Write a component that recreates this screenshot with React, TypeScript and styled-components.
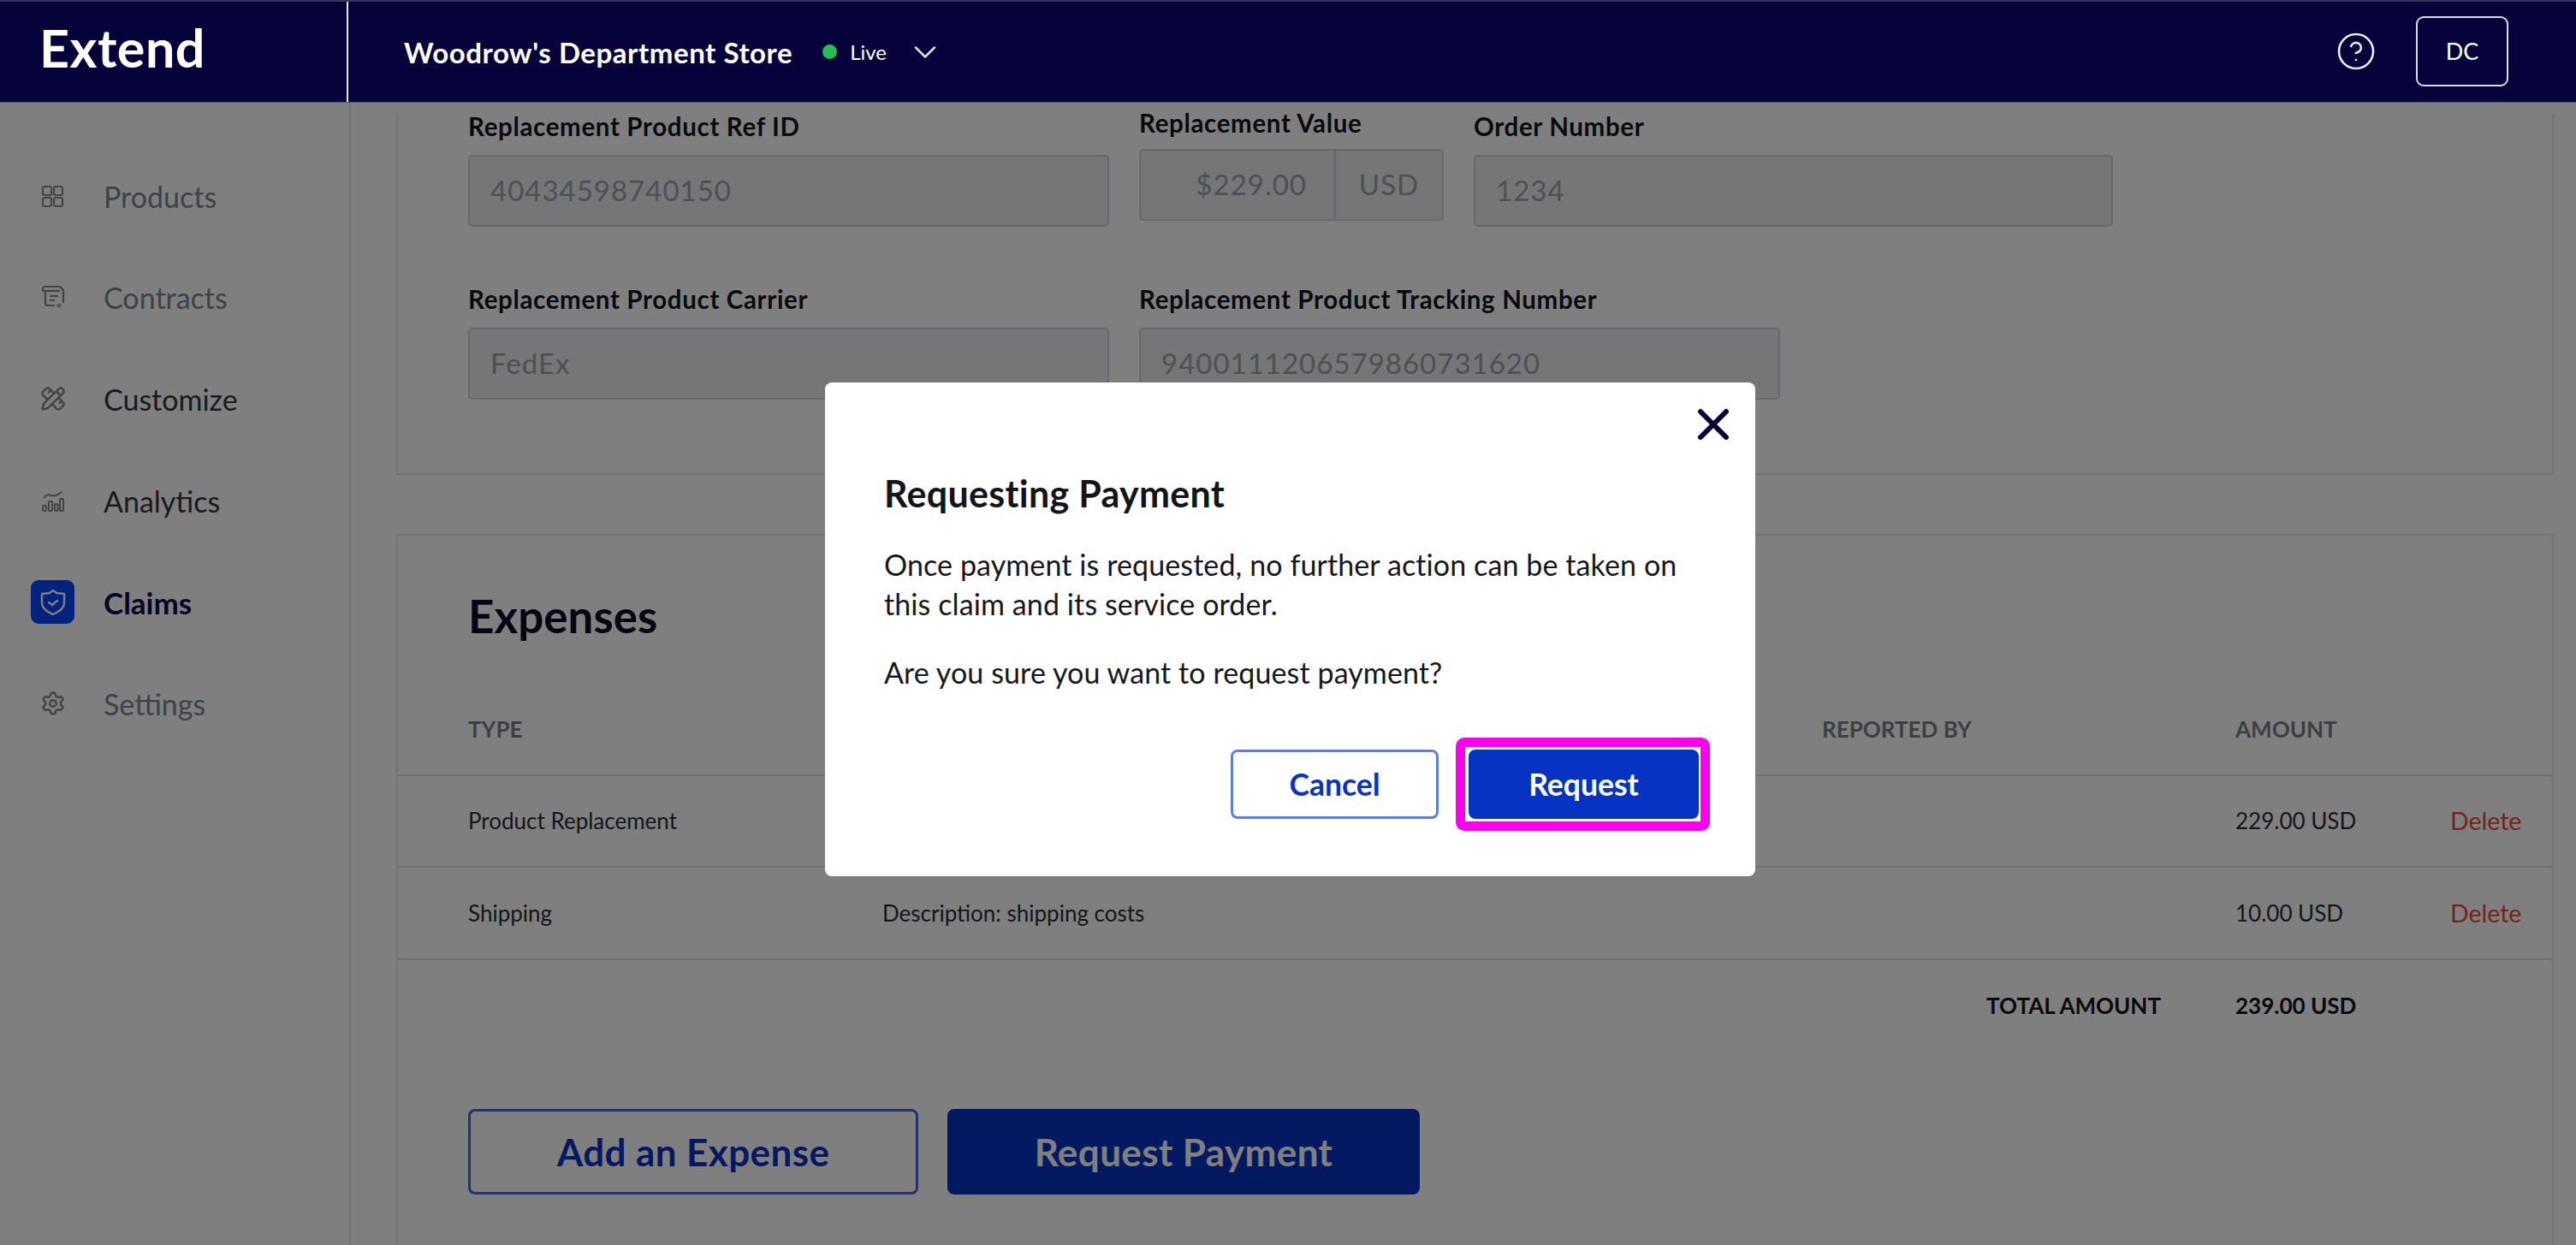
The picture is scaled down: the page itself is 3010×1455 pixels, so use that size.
import styled, { createGlobalStyle } from "styled-components";
import { ChevronDown, CircleHelp, PencilRuler, Settings, X } from "lucide-react";

const font = `"Lato", "Open Sans", sans-serif`;

const GlobalStyle = createGlobalStyle`
  html, body { margin: 0; padding: 0; background: #fff; }
  * { box-sizing: border-box; }
`;

const Page = styled.div`
  position: relative;
  width: 3010px;
  height: 1455px;
  overflow: hidden;
  background: #fff;
  font-family: ${font};
  color: #2b2e34;
`;

const TopBar = styled.header`
  position: relative;
  z-index: 3;
  display: flex;
  align-items: stretch;
  height: 120px;
  background: #06033a;
  border-top: 2px solid #35335f;
  border-bottom: 1px solid #55557a;
  color: #fff;
`;

const Brand = styled.div`
  display: flex;
  align-items: center;
  width: 407px;
  padding: 0 0 10px 46px;
  border-right: 2px solid #e6e6ee;
  font-size: 61px;
  font-weight: 700;
  letter-spacing: 0.5px;
`;

const Store = styled.div`
  display: flex;
  align-items: center;
  flex: 1;
  padding-left: 65px;
`;

const StoreName = styled.span`
  font-size: 33px;
  font-weight: 700;
  letter-spacing: 0.55px;
`;

const LiveDot = styled.span`
  width: 17px;
  height: 17px;
  margin-left: 35px;
  border-radius: 50%;
  background: #22c04f;
`;

const LiveText = styled.span`
  margin-left: 15px;
  font-size: 24px;
`;

const Chevron = styled(ChevronDown)`
  margin-left: 23px;
  color: #d8d8e2;
`;

const HelpIcon = styled(CircleHelp)`
  margin-right: 46px;
  color: #ecedf3;
`;

const Actions = styled.div`
  display: flex;
  align-items: center;
  padding: 0 79px 2px 0;
`;

const UserButton = styled.div`
  display: flex;
  align-items: center;
  justify-content: center;
  width: 108px;
  height: 82px;
  border: 2px solid #dcdce6;
  border-radius: 9px;
  font-size: 27px;
`;

const Body = styled.div`
  display: flex;
  height: 1335px;
`;

const Sidebar = styled.nav`
  display: flex;
  flex-direction: column;
  flex: 0 0 410px;
  padding-top: 50px;
  border-right: 2px solid #e4e6ea;
`;

const NavItem = styled.div<{ $tone: string; $bold?: boolean }>`
  display: flex;
  align-items: center;
  height: 118.6px;
  color: ${(p) => p.$tone};
  font-size: ${(p) => (p.$bold ? 35 : 34)}px;
  font-weight: ${(p) => (p.$bold ? 700 : 400)};
`;

const NavIconBox = styled.span<{ $active?: boolean }>`
  display: flex;
  align-items: center;
  justify-content: center;
  width: 51px;
  height: 51px;
  margin: 0 34px 0 36px;
  border-radius: 9px;
  background: ${(p) => (p.$active ? "#0646fe" : "transparent")};
  color: ${(p) => (p.$active ? "#fff" : "#848990")};
`;

const Main = styled.main`
  flex: 1;
  padding: 13px 26px 0 53px;
  overflow: hidden;
`;

const Card = styled.section<{ $top?: boolean }>`
  border: 2px solid #e6e8eb;
  border-top-width: ${(p) => (p.$top ? 0 : 2)}px;
  margin-bottom: 69px;
  padding-bottom: ${(p) => (p.$top ? 86 : 120)}px;
`;

const FieldRow = styled.div<{ $gap?: number }>`
  display: flex;
  gap: 35px;
  padding-left: 82px;
  margin-top: ${(p) => p.$gap ?? 0}px;
`;

const Field = styled.div<{ $width: number; $raised?: boolean }>`
  width: ${(p) => p.$width}px;
  margin-top: ${(p) => (p.$raised ? -4 : 0)}px;
`;

const Label = styled.div<{ $raised?: boolean }>`
  height: 30px;
  margin-bottom: ${(p) => (p.$raised ? 15 : 18)}px;
  color: #14151b;
  font-size: 29.5px;
  font-weight: 700;
  letter-spacing: 0.65px;
  line-height: 30px;
  white-space: nowrap;
`;

const InputBox = styled.div`
  display: flex;
  align-items: center;
  height: 84px;
  padding: 0 0 3px 24px;
  background: #e8ecf0;
  border: 2px solid #ced3da;
  border-radius: 5px;
  color: #9aa1ab;
  font-size: 33px;
  letter-spacing: 1px;
`;

const MoneyBox = styled(InputBox)`
  padding: 0;
`;

const MoneyValue = styled.div`
  flex: 1;
  padding: 0 32px 3px 0;
  text-align: right;
`;

const MoneyUnit = styled.div`
  display: flex;
  align-items: center;
  justify-content: center;
  width: 126px;
  height: 100%;
  padding-bottom: 3px;
  border-left: 2px solid #ced3da;
`;

const SectionTitle = styled.h2`
  height: 60px;
  margin: 64px 0 49px 82px;
  color: #0c0c24;
  font-size: 53px;
  font-weight: 700;
  line-height: 60px;
`;

const TableRow = styled.div<{ $noLine?: boolean }>`
  display: grid;
  grid-template-columns: 484px 1098px 483px 251px 1fr;
  align-items: center;
  height: 107.5px;
  padding-left: 82px;
  border-bottom: ${(p) => (p.$noLine ? "none" : "2px solid #dfe2e6")};
  font-size: 26px;
`;

const HeadCell = styled.div`
  color: #7a7e86;
  font-size: 26px;
  font-weight: 700;
`;

const Cell = styled.div<{ $bold?: boolean }>`
  color: ${(p) => (p.$bold ? "#14151b" : "#2b2e34")};
  font-weight: ${(p) => (p.$bold ? 700 : 400)};
`;

const TotalCell = styled(Cell)`
  grid-column: 3;
  padding-right: 87px;
  text-align: right;
`;

const DeleteLink = styled.div`
  color: #e64a32;
  font-size: 28.5px;
`;

const ButtonRow = styled.div`
  display: flex;
  gap: 34px;
  padding: 67px 0 0 82px;
`;

const PageButton = styled.div<{ $filled?: boolean; $width: number }>`
  display: flex;
  align-items: center;
  justify-content: center;
  width: ${(p) => p.$width}px;
  height: 100px;
  border: 3px solid ${(p) => (p.$filled ? "#0733c2" : "#4a66d8")};
  border-radius: 8px;
  background: ${(p) => (p.$filled ? "#0733c2" : "transparent")};
  color: ${(p) => (p.$filled ? "#fff" : "#0a33c4")};
  font-size: 44px;
  font-weight: 700;
  letter-spacing: 0.4px;
`;

const Overlay = styled.div`
  position: absolute;
  inset: 120px 0 0 0;
  z-index: 2;
  background: rgba(0, 0, 0, 0.5);
`;

const Modal = styled.div`
  position: absolute;
  top: 447px;
  left: 964px;
  z-index: 4;
  width: 1087px;
  height: 577px;
  padding: 106px 69px 0;
  border-radius: 8px;
  background: #fff;
  color: #17181e;
`;

const CloseIcon = styled(X)`
  position: absolute;
  top: 19px;
  right: 19px;
  color: #06033a;
`;

const ModalTitle = styled.h3`
  margin: 0 0 36px;
  color: #14151b;
  font-size: 43px;
  font-weight: 700;
  letter-spacing: 0.3px;
  line-height: 48px;
`;

const ModalText = styled.p`
  margin: 0 0 34px;
  font-size: 34px;
  letter-spacing: 0.1px;
  line-height: 46px;
`;

const ModalActions = styled.div`
  position: absolute;
  top: 429px;
  right: 66px;
  display: flex;
  gap: 35px;
`;

const ModalButton = styled.div<{ $filled?: boolean }>`
  display: flex;
  align-items: center;
  justify-content: center;
  width: ${(p) => (p.$filled ? 269 : 243)}px;
  height: 81px;
  border: 3px solid ${(p) => (p.$filled ? "#0733c2" : "#5f7fe0")};
  border-radius: 8px;
  background: ${(p) => (p.$filled ? "#0733c2" : "#fff")};
  color: ${(p) => (p.$filled ? "#fff" : "#0a33c4")};
  font-size: 35.5px;
  font-weight: 700;
`;

const Highlight = styled.div`
  position: absolute;
  inset: -14px -13px -14px -15px;
  border: 11px solid #ff00ee;
  border-radius: 10px;
  pointer-events: none;
`;

const HighlightWrap = styled.div`
  position: relative;
`;

const ProductsIcon = () => (
  <svg width="27" height="27" viewBox="0 0 27 27" fill="none" stroke="currentColor" strokeWidth="2.2">
    <rect x="2" y="2" width="10" height="10" rx="2" />
    <rect x="15" y="2" width="10" height="10" rx="2" />
    <rect x="2" y="15" width="10" height="10" rx="2" />
    <rect x="15" y="15" width="10" height="10" rx="2" />
  </svg>
);

const ContractsIcon = () => (
  <svg width="28" height="30" viewBox="0 0 28 30" fill="none" stroke="currentColor" strokeWidth="2.2">
    <path d="M2 7V4.5A2.5 2.5 0 0 1 4.5 2H22l4 4v15" />
    <path d="M2 7h20" />
    <path d="M5 7v14a3 3 0 0 0 3 3h8" />
    <path d="M10 13h10M10 18h6" />
    <circle cx="21" cy="24" r="2.5" fill="#c79aa0" stroke="none" />
  </svg>
);

const AnalyticsIcon = () => (
  <svg width="28" height="28" viewBox="0 0 28 28" fill="none" stroke="currentColor" strokeWidth="2">
    <path d="M3 11c4-5 6-4 9-3s7 0 12-4" />
    <rect x="2" y="20" width="4" height="6" rx="1" />
    <rect x="9" y="15" width="4" height="11" rx="1" />
    <rect x="16" y="18" width="3.6" height="8" rx="1" />
    <rect x="22" y="12" width="4" height="14" rx="1" />
  </svg>
);

const ClaimsIcon = () => (
  <svg width="30" height="32" viewBox="0 0 30 32" fill="none" stroke="currentColor" strokeWidth="2.4" strokeLinecap="round" strokeLinejoin="round">
    <path d="M15 2l4 3 9 1v11c0 6-6 10-13 13C8 27 2 23 2 17V6l9-1z" />
    <path d="M10 16l4 3 6-5" />
  </svg>
);

const expenses = [
  { type: "Product Replacement", description: "", amount: "229.00 USD" },
  { type: "Shipping", description: "Description: shipping costs", amount: "10.00 USD" },
];

export default function App() {
  return (
    <Page>
      <GlobalStyle />
      <TopBar>
        <Brand>Extend</Brand>
        <Store>
          <StoreName>Woodrow's Department Store</StoreName>
          <LiveDot />
          <LiveText>Live</LiveText>
          <Chevron size={44} strokeWidth={1.4} />
        </Store>
        <Actions>
          <HelpIcon size={48} strokeWidth={1.3} />
          <UserButton>DC</UserButton>
        </Actions>
      </TopBar>
      <Body>
        <Sidebar>
          <NavItem $tone="#7e848c">
            <NavIconBox><ProductsIcon /></NavIconBox>Products
          </NavItem>
          <NavItem $tone="#7e848c">
            <NavIconBox><ContractsIcon /></NavIconBox>Contracts
          </NavItem>
          <NavItem $tone="#33363e">
            <NavIconBox><PencilRuler size={30} strokeWidth={2} /></NavIconBox>Customize
          </NavItem>
          <NavItem $tone="#33363e">
            <NavIconBox><AnalyticsIcon /></NavIconBox>Analytics
          </NavItem>
          <NavItem $tone="#0b0b4a" $bold>
            <NavIconBox $active><ClaimsIcon /></NavIconBox>Claims
          </NavItem>
          <NavItem $tone="#7e848c">
            <NavIconBox><Settings size={30} strokeWidth={2} /></NavIconBox>Settings
          </NavItem>
        </Sidebar>
        <Main>
          <Card $top>
            <FieldRow>
              <Field $width={749}>
                <Label>Replacement Product Ref ID</Label>
                <InputBox>40434598740150</InputBox>
              </Field>
              <Field $width={356} $raised>
                <Label $raised>Replacement Value</Label>
                <MoneyBox>
                  <MoneyValue>$229.00</MoneyValue>
                  <MoneyUnit>USD</MoneyUnit>
                </MoneyBox>
              </Field>
              <Field $width={747}>
                <Label>Order Number</Label>
                <InputBox>1234</InputBox>
              </Field>
            </FieldRow>
            <FieldRow $gap={70}>
              <Field $width={749}>
                <Label>Replacement Product Carrier</Label>
                <InputBox>FedEx</InputBox>
              </Field>
              <Field $width={749}>
                <Label>Replacement Product Tracking Number</Label>
                <InputBox>9400111206579860731620</InputBox>
              </Field>
            </FieldRow>
          </Card>
          <Card>
            <SectionTitle>Expenses</SectionTitle>
            <TableRow>
              <HeadCell>TYPE</HeadCell>
              <HeadCell />
              <HeadCell>REPORTED BY</HeadCell>
              <HeadCell>AMOUNT</HeadCell>
            </TableRow>
            {expenses.map((row) => (
              <TableRow key={row.type}>
                <Cell>{row.type}</Cell>
                <Cell>{row.description}</Cell>
                <Cell />
                <Cell>{row.amount}</Cell>
                <DeleteLink>Delete</DeleteLink>
              </TableRow>
            ))}
            <TableRow $noLine>
              <TotalCell $bold>TOTAL AMOUNT</TotalCell>
              <Cell $bold>239.00 USD</Cell>
            </TableRow>
            <ButtonRow>
              <PageButton $width={526}>Add an Expense</PageButton>
              <PageButton $width={552} $filled>Request Payment</PageButton>
            </ButtonRow>
          </Card>
        </Main>
      </Body>
      <Overlay />
      <Modal>
        <CloseIcon size={60} strokeWidth={2.4} />
        <ModalTitle>Requesting Payment</ModalTitle>
        <ModalText>
          Once payment is requested, no further action can be taken on this claim and its service order.
        </ModalText>
        <ModalText>Are you sure you want to request payment?</ModalText>
        <ModalActions>
          <ModalButton>Cancel</ModalButton>
          <HighlightWrap>
            <ModalButton $filled>Request</ModalButton>
            <Highlight />
          </HighlightWrap>
        </ModalActions>
      </Modal>
    </Page>
  );
}
